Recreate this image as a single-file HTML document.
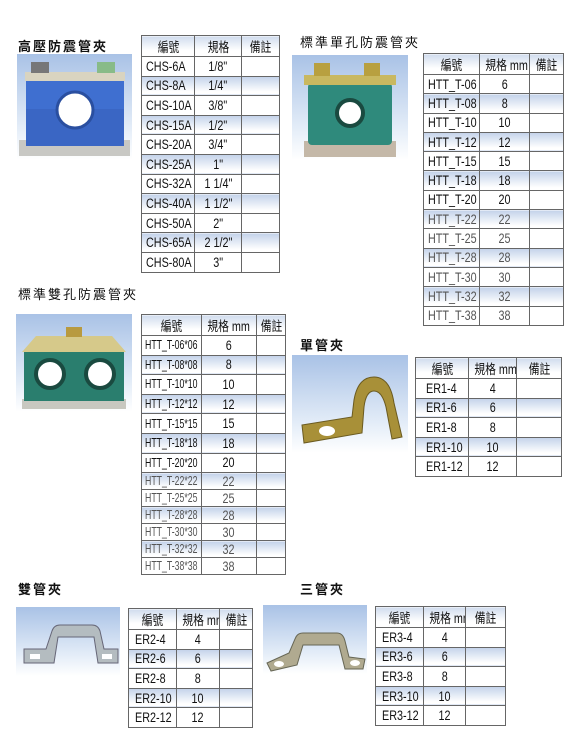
<!DOCTYPE html>
<html><head><meta charset="utf-8"><style>
*{margin:0;padding:0;box-sizing:border-box}
body{width:580px;height:750px;background:#fff;position:relative;overflow:hidden;font-family:"Liberation Sans","Noto Sans CJK TC",sans-serif;color:#111}
.t{position:absolute;font-size:13px;font-weight:bold;letter-spacing:2px;font-family:"Noto Sans CJK TC","WenQuanYi Zen Hei",sans-serif}
table{position:absolute;border-collapse:collapse;border:1.5px solid #444;font-size:13.5px;table-layout:fixed}
td{border:1px solid #666;padding:0;text-align:center;white-space:nowrap;overflow:hidden}
td span{display:inline-block;transform:scaleX(.8);transform-origin:center}
td:first-child{text-align:left;padding-left:4px}
td:first-child span{transform-origin:left}
td.n span{transform:scaleX(.7)}
tr.h td{text-align:center;padding-left:0;background:linear-gradient(#d0dcee,#fff 70%)}
tr.h td span{transform-origin:center}
tr.s td{background:linear-gradient(#c3d2ea,#fff 85%)}
tr.g td{color:#555}
.img{position:absolute;background:linear-gradient(#a9c2e6,#e4edf8 70%,#fff)}
</style></head><body>

<div class="t" style="left:18px;top:36px">高壓防震管夾</div>
<div class="img" style="left:17px;top:54px;width:115px;height:106px">
<svg width="115" height="106"><rect x="2" y="86" width="111" height="16" fill="#c8c8c4"/><rect x="9" y="52" width="98" height="40" fill="#3a66c4"/><rect x="9" y="25" width="98" height="30" fill="#3f6fd0"/><rect x="8" y="18" width="100" height="9" fill="#d9d4c0"/><rect x="14" y="8" width="18" height="11" fill="#777"/><rect x="80" y="8" width="18" height="11" fill="#8b8"/><circle cx="58" cy="56" r="18" fill="#fff" stroke="#2a4fa0" stroke-width="3"/></svg></div>
<table style="left:141px;top:35px;width:139px">
<colgroup><col style="width:53px"><col style="width:47px"><col></colgroup>
<tr class="h" style="height:20px"><td><span>編號</span></td><td><span>規格</span></td><td><span>備註</span></td></tr>
<tr style="height:19.6px"><td><span>CHS-6A</span></td><td><span>1/8"</span></td><td></td></tr>
<tr class="s" style="height:19.6px"><td><span>CHS-8A</span></td><td><span>1/4"</span></td><td></td></tr>
<tr style="height:19.6px"><td><span>CHS-10A</span></td><td><span>3/8"</span></td><td></td></tr>
<tr class="s" style="height:19.6px"><td><span>CHS-15A</span></td><td><span>1/2"</span></td><td></td></tr>
<tr style="height:19.6px"><td><span>CHS-20A</span></td><td><span>3/4"</span></td><td></td></tr>
<tr class="s" style="height:19.6px"><td><span>CHS-25A</span></td><td><span>1"</span></td><td></td></tr>
<tr style="height:19.6px"><td><span>CHS-32A</span></td><td><span>1 1/4"</span></td><td></td></tr>
<tr class="s" style="height:19.6px"><td><span>CHS-40A</span></td><td><span>1 1/2"</span></td><td></td></tr>
<tr style="height:19.6px"><td><span>CHS-50A</span></td><td><span>2"</span></td><td></td></tr>
<tr class="s" style="height:19.6px"><td><span>CHS-65A</span></td><td><span>2 1/2"</span></td><td></td></tr>
<tr style="height:19.6px"><td><span>CHS-80A</span></td><td><span>3"</span></td><td></td></tr>
</table>

<div class="t" style="left:300px;top:32px;font-weight:normal">標準單孔防震管夾</div>
<div class="img" style="left:292px;top:55px;width:116px;height:105px">
<svg width="116" height="105"><rect x="12" y="86" width="92" height="16" fill="#c4b8a8"/><rect x="16" y="28" width="84" height="62" rx="4" fill="#2f8a7c"/><rect x="12" y="20" width="92" height="10" fill="#c9b860"/><rect x="22" y="8" width="16" height="13" fill="#b8a040"/><rect x="72" y="8" width="16" height="13" fill="#b8a040"/><circle cx="58" cy="58" r="13" fill="#fff" stroke="#1a4a40" stroke-width="4"/></svg></div>
<table style="left:423px;top:53px;width:141px">
<colgroup><col style="width:56px"><col style="width:50px"><col></colgroup>
<tr class="h" style="height:20px"><td><span>編號</span></td><td><span>規格 mm</span></td><td><span>備註</span></td></tr>
<tr style="height:19.3px"><td><span>HTT_T-06</span></td><td><span>6</span></td><td></td></tr>
<tr class="s" style="height:19.3px"><td><span>HTT_T-08</span></td><td><span>8</span></td><td></td></tr>
<tr style="height:19.3px"><td><span>HTT_T-10</span></td><td><span>10</span></td><td></td></tr>
<tr class="s" style="height:19.3px"><td><span>HTT_T-12</span></td><td><span>12</span></td><td></td></tr>
<tr style="height:19.3px"><td><span>HTT_T-15</span></td><td><span>15</span></td><td></td></tr>
<tr class="s" style="height:19.3px"><td><span>HTT_T-18</span></td><td><span>18</span></td><td></td></tr>
<tr style="height:19.3px"><td><span>HTT_T-20</span></td><td><span>20</span></td><td></td></tr>
<tr class="s g" style="height:19.3px"><td><span>HTT_T-22</span></td><td><span>22</span></td><td></td></tr>
<tr class="g" style="height:19.3px"><td><span>HTT_T-25</span></td><td><span>25</span></td><td></td></tr>
<tr class="s g" style="height:19.3px"><td><span>HTT_T-28</span></td><td><span>28</span></td><td></td></tr>
<tr class="g" style="height:19.3px"><td><span>HTT_T-30</span></td><td><span>30</span></td><td></td></tr>
<tr class="s g" style="height:19.3px"><td><span>HTT_T-32</span></td><td><span>32</span></td><td></td></tr>
<tr class="g" style="height:19.3px"><td><span>HTT_T-38</span></td><td><span>38</span></td><td></td></tr>
</table>

<div class="t" style="left:18px;top:284px;font-weight:normal">標準雙孔防震管夾</div>
<div class="img" style="left:16px;top:314px;width:116px;height:98px">
<svg width="116" height="98"><rect x="6" y="85" width="104" height="10" fill="#c8c8c0"/><rect x="8" y="38" width="100" height="49" fill="#2a7e6e"/><polygon points="6,38 20,22 96,22 110,38" fill="#d6c98a"/><rect x="50" y="13" width="16" height="10" fill="#b89a40"/><circle cx="34" cy="60" r="14" fill="#fff" stroke="#1a4a40" stroke-width="4"/><circle cx="84" cy="60" r="14" fill="#fff" stroke="#1a4a40" stroke-width="4"/></svg></div>
<table style="left:141px;top:314px;width:145px">
<colgroup><col style="width:60px"><col style="width:55px"><col></colgroup>
<tr class="h" style="height:21px"><td><span>編號</span></td><td><span>規格 mm</span></td><td><span>備註</span></td></tr>
<tr style="height:19.6px"><td class="n" style="font-size:12.5px;padding-left:3px"><span>HTT_T-06*06</span></td><td><span>6</span></td><td></td></tr>
<tr class="s" style="height:19.6px"><td class="n" style="font-size:12.5px;padding-left:3px"><span>HTT_T-08*08</span></td><td><span>8</span></td><td></td></tr>
<tr style="height:19.6px"><td class="n" style="font-size:12.5px;padding-left:3px"><span>HTT_T-10*10</span></td><td><span>10</span></td><td></td></tr>
<tr class="s" style="height:19.6px"><td class="n" style="font-size:12.5px;padding-left:3px"><span>HTT_T-12*12</span></td><td><span>12</span></td><td></td></tr>
<tr style="height:19.6px"><td class="n" style="font-size:12.5px;padding-left:3px"><span>HTT_T-15*15</span></td><td><span>15</span></td><td></td></tr>
<tr class="s" style="height:19.6px"><td class="n" style="font-size:12.5px;padding-left:3px"><span>HTT_T-18*18</span></td><td><span>18</span></td><td></td></tr>
<tr style="height:19.6px"><td class="n" style="font-size:12.5px;padding-left:3px"><span>HTT_T-20*20</span></td><td><span>20</span></td><td></td></tr>
<tr class="s g" style="height:17px"><td class="n" style="font-size:12.5px;padding-left:3px"><span>HTT_T-22*22</span></td><td><span>22</span></td><td></td></tr>
<tr class="g" style="height:17px"><td class="n" style="font-size:12.5px;padding-left:3px"><span>HTT_T-25*25</span></td><td><span>25</span></td><td></td></tr>
<tr class="s g" style="height:17px"><td class="n" style="font-size:12.5px;padding-left:3px"><span>HTT_T-28*28</span></td><td><span>28</span></td><td></td></tr>
<tr class="g" style="height:17px"><td class="n" style="font-size:12.5px;padding-left:3px"><span>HTT_T-30*30</span></td><td><span>30</span></td><td></td></tr>
<tr class="s g" style="height:17px"><td class="n" style="font-size:12.5px;padding-left:3px"><span>HTT_T-32*32</span></td><td><span>32</span></td><td></td></tr>
<tr class="g" style="height:17px"><td class="n" style="font-size:12.5px;padding-left:3px"><span>HTT_T-38*38</span></td><td><span>38</span></td><td></td></tr>
</table>

<div class="t" style="left:300px;top:335px">單管夾</div>
<div class="img" style="left:292px;top:355px;width:116px;height:98px">
<svg width="116" height="98"><path d="M10,70 L60,62 L62,45 Q66,22 82,22 Q98,22 102,48 L110,82 L100,84 L94,52 Q90,36 82,36 Q74,36 72,52 L70,78 L12,88 Z" fill="#a89038" stroke="#6a5a20"/><ellipse cx="35" cy="76" rx="8" ry="5" fill="#fff"/></svg></div>
<table style="left:415px;top:357px;width:147px">
<colgroup><col style="width:53px"><col style="width:48px"><col></colgroup>
<tr class="h" style="height:20px"><td><span>編號</span></td><td><span>規格 mm</span></td><td><span>備註</span></td></tr>
<tr style="height:19.6px"><td style="padding-left:10px"><span>ER1-4</span></td><td><span>4</span></td><td></td></tr>
<tr class="s" style="height:19.6px"><td style="padding-left:10px"><span>ER1-6</span></td><td><span>6</span></td><td></td></tr>
<tr style="height:19.6px"><td style="padding-left:10px"><span>ER1-8</span></td><td><span>8</span></td><td></td></tr>
<tr class="s" style="height:19.6px"><td style="padding-left:10px"><span>ER1-10</span></td><td><span>10</span></td><td></td></tr>
<tr style="height:19.6px"><td style="padding-left:10px"><span>ER1-12</span></td><td><span>12</span></td><td></td></tr>
</table>

<div class="t" style="left:18px;top:579px">雙管夾</div>
<div class="img" style="left:16px;top:607px;width:104px;height:69px">
<svg width="104" height="69"><path d="M8,42 L30,42 L36,24 Q38,18 44,18 L76,18 Q82,18 84,24 L88,42 L102,42 L102,56 L82,56 L78,30 L42,30 L38,56 L8,56 Z" fill="#b4bcc0" stroke="#667"/><rect x="14" y="47" width="10" height="5" fill="#fff"/><rect x="86" y="47" width="10" height="5" fill="#fff"/></svg></div>
<table style="left:128px;top:608px;width:125px">
<colgroup><col style="width:48px"><col style="width:43px"><col></colgroup>
<tr class="h" style="height:20px"><td><span>編號</span></td><td><span>規格 mm</span></td><td><span>備註</span></td></tr>
<tr style="height:19.6px"><td style="padding-left:6px"><span>ER2-4</span></td><td><span>4</span></td><td></td></tr>
<tr class="s" style="height:19.6px"><td style="padding-left:6px"><span>ER2-6</span></td><td><span>6</span></td><td></td></tr>
<tr style="height:19.6px"><td style="padding-left:6px"><span>ER2-8</span></td><td><span>8</span></td><td></td></tr>
<tr class="s" style="height:19.6px"><td style="padding-left:6px"><span>ER2-10</span></td><td><span>10</span></td><td></td></tr>
<tr style="height:19.6px"><td style="padding-left:6px"><span>ER2-12</span></td><td><span>12</span></td><td></td></tr>
</table>

<div class="t" style="left:300px;top:579px">三管夾</div>
<div class="img" style="left:263px;top:605px;width:104px;height:69px">
<svg width="104" height="69"><path d="M4,58 L26,48 L32,34 Q34,28 40,28 L74,28 Q80,28 82,36 L86,52 L102,54 L100,64 L82,64 L76,40 L40,40 L34,60 L8,66 Z" fill="#b0aa90" stroke="#665"/><ellipse cx="16" cy="59" rx="5" ry="3" fill="#fff"/><ellipse cx="92" cy="58" rx="5" ry="3" fill="#fff"/></svg></div>
<table style="left:375px;top:606px;width:131px">
<colgroup><col style="width:48px"><col style="width:42px"><col></colgroup>
<tr class="h" style="height:20px"><td><span>編號</span></td><td><span>規格 mm</span></td><td><span>備註</span></td></tr>
<tr style="height:19.6px"><td style="padding-left:6px"><span>ER3-4</span></td><td><span>4</span></td><td></td></tr>
<tr class="s" style="height:19.6px"><td style="padding-left:6px"><span>ER3-6</span></td><td><span>6</span></td><td></td></tr>
<tr style="height:19.6px"><td style="padding-left:6px"><span>ER3-8</span></td><td><span>8</span></td><td></td></tr>
<tr class="s" style="height:19.6px"><td style="padding-left:6px"><span>ER3-10</span></td><td><span>10</span></td><td></td></tr>
<tr style="height:19.6px"><td style="padding-left:6px"><span>ER3-12</span></td><td><span>12</span></td><td></td></tr>
</table>
</body></html>
